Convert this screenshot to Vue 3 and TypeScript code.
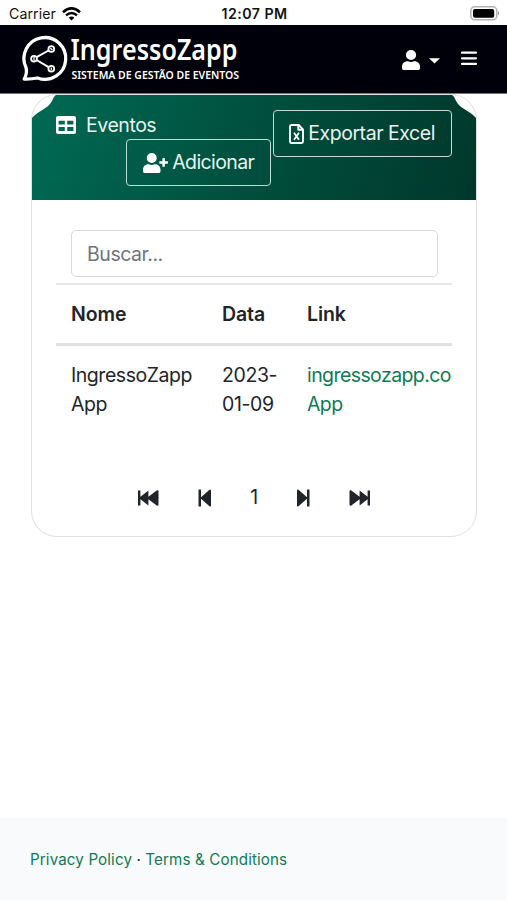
<script setup lang="ts">
import { ref } from 'vue'

interface EventRow {
  name: string
  date: string
  link: string
}

const search = ref('')
const page = ref(1)
const rows: EventRow[] = [
  { name: 'IngressoZapp App', date: '2023-01-09', link: 'ingressozapp.co App' },
]
</script>

<template>
  <div class="screen">
    <div class="status">
      <div class="carrier">
        <span>Carrier</span>
        <svg width="19" height="14" viewBox="0 0 19 14">
          <path d="M1 5.2Q9.5-2.3 18 5.2" fill="none" stroke="#000" stroke-width="2.6" />
          <path d="M4 8.3Q9.5 3.5 15 8.3" fill="none" stroke="#000" stroke-width="2.4" />
          <path d="M6.6 10.6Q9.5 8.2 12.4 10.6L9.5 13.6Z" />
        </svg>
      </div>
      <span class="clock">12:07 PM</span>
      <svg class="battery" width="30" height="15" viewBox="0 0 30 15">
        <rect x="0.8" y="0.8" width="26" height="13" rx="4" fill="#fff" stroke="#b4b4b4" stroke-width="1.6" />
        <rect x="3" y="3" width="21.2" height="8.8" rx="2" />
        <path d="M28 5Q30.2 7.3 28 9.6Z" fill="#999" />
      </svg>
    </div>

    <nav class="navbar">
      <svg class="logo" width="222" height="56" viewBox="0 0 222 56">
        <g fill="none" stroke="#fff">
          <path d="M5 36.5A20.9 20.9 0 1 1 16.5 47Q10 48.2 3.2 48Q6.6 42 5 36.5Z" stroke-width="3.3" stroke-linejoin="round" />
          <path d="M15.6 26.2L27.6 19.5M15.6 29L27.6 36.2" stroke-width="2" />
          <circle cx="13" cy="27.7" r="2.9" stroke-width="1.8" />
          <circle cx="30.3" cy="18" r="2.9" stroke-width="1.8" />
          <circle cx="30.3" cy="37.8" r="2.9" stroke-width="1.8" />
          <path d="M13 25.8v4M29.3 17l2 2M30.3 36.4v2.8" stroke-width="1.3" />
        </g>
        <text class="brand" x="49.5" y="29.3" textLength="167" lengthAdjust="spacingAndGlyphs">IngressoZapp</text>
        <text class="tagline" x="50.5" y="47.5" textLength="167.5" lengthAdjust="spacingAndGlyphs">SISTEMA DE GESTÃO DE EVENTOS</text>
      </svg>
      <div class="nav-actions">
        <svg width="18" height="20" viewBox="0 0 448 512" preserveAspectRatio="none">
          <path fill="#fff" d="M224 256a128 128 0 1 0 0-256 128 128 0 0 0 0 256zm90 32h-17a174 174 0 0 1-146 0h-17C60 288 0 348 0 422v42c0 27 21 48 48 48h352c27 0 48-21 48-48v-42c0-74-60-134-134-134z" />
        </svg>
        <svg class="caret" width="11" height="6" viewBox="0 0 12 7" preserveAspectRatio="none"><path d="M0 .3h12L6 6.4Z" fill="#fff" /></svg>
        <svg class="menu" width="16" height="15" viewBox="0 0 16 15">
          <path d="M1 1.7h14M1 7.3h14M1 12.9h14" stroke="#fff" stroke-width="2.2" stroke-linecap="round" />
        </svg>
      </div>
    </nav>

    <main>
      <section class="card">
        <header class="card-header">
          <div class="title">
            <svg width="20" height="18" viewBox="0 0 20 18">
              <path fill="#fff" fill-rule="evenodd" d="M2 0h16q2 0 2 2v14q0 2-2 2H2q-2 0-2-2V2q0-2 2-2ZM2.6 4.8v3.8h6.2V4.8ZM11.2 4.8v3.8h6.2V4.8ZM2.6 11v4h6.2v-4ZM11.2 11v4h6.2v-4Z" />
            </svg>
            <span>Eventos</span>
          </div>
          <div class="buttons">
            <button class="btn add" type="button">
              <svg width="25" height="20" viewBox="0 0 640 512">
                <path fill="#fff" d="M224 256a128 128 0 1 0 0-256 128 128 0 0 0 0 256zm90 32h-17a174 174 0 0 1-146 0h-17C60 288 0 348 0 422v42c0 27 21 48 48 48h352c27 0 48-21 48-48v-42c0-74-60-134-134-134zM624 208h-64v-64c0-9-7-16-16-16h-32c-9 0-16 7-16 16v64h-64c-9 0-16 7-16 16v32c0 9 7 16 16 16h64v64c0 9 7 16 16 16h32c9 0 16-7 16-16v-64h64c9 0 16-7 16-16v-32c0-9-7-16-16-16z" />
              </svg>
              <span>Adicionar</span>
            </button>
            <button class="btn export" type="button">
              <svg width="15" height="20" viewBox="0 0 15 20">
                <path d="M2.5 1H9.7L14 5.3V17.5q0 1.5-1.5 1.5h-10Q1 19 1 17.5v-15Q1 1 2.5 1ZM9.3 1v4.8H14" fill="none" stroke="#fff" stroke-width="1.9" stroke-linejoin="round" />
                <path d="M5 8.8l5 7M10 8.8l-5 7" stroke="#fff" stroke-width="1.8" />
              </svg>
              <span>Exportar Excel</span>
            </button>
          </div>
        </header>

        <div class="card-body">
          <input v-model="search" class="search" type="text" placeholder="Buscar..." />
          <table>
            <thead>
              <tr><th class="c-name">Nome</th><th class="c-date">Data</th><th>Link</th></tr>
            </thead>
            <tbody>
              <tr v-for="row in rows" :key="row.name">
                <td>{{ row.name }}</td>
                <td class="date">{{ row.date }}</td>
                <td><a class="link">{{ row.link }}</a></td>
              </tr>
            </tbody>
          </table>
          <div class="pager">
            <svg width="21" height="16" viewBox="0 0 21 16"><path d="M0 .5h2.4v6.3L10.4.5v6.3L19 .3q1.5-.5 1.5 1v13.4q0 1.5-1.5 1L10.4 9.2v6.3l-8-6.3v6.3H0Z" /></svg>
            <svg width="14" height="18" viewBox="0 0 14 18"><path d="M.5.5H3v7.7L11.5.7Q13 0 13 1.6v14.8q0 1.6-1.5.9L3 9.8v7.7H.5Z" /></svg>
            <span>{{ page }}</span>
            <svg class="flip" width="14" height="18" viewBox="0 0 14 18"><path d="M.5.5H3v7.7L11.5.7Q13 0 13 1.6v14.8q0 1.6-1.5.9L3 9.8v7.7H.5Z" /></svg>
            <svg class="flip" width="21" height="16" viewBox="0 0 21 16"><path d="M0 .5h2.4v6.3L10.4.5v6.3L19 .3q1.5-.5 1.5 1v13.4q0 1.5-1.5 1L10.4 9.2v6.3l-8-6.3v6.3H0Z" /></svg>
          </div>
        </div>
      </section>
    </main>

    <footer>
      <a>Privacy Policy</a><span> · </span><a>Terms &amp; Conditions</a>
    </footer>
  </div>
</template>

<style>
body {
  margin: 0;
  background: #fff;
}
</style>

<style scoped>
* {
  box-sizing: border-box;
}
svg {
  display: block;
  flex: none;
  overflow: visible;
}
.screen {
  width: 507px;
  height: 900px;
  overflow: hidden;
  display: flex;
  flex-direction: column;
  font-family: Inter, 'Liberation Sans', sans-serif;
  font-size: 19.5px;
  line-height: 29.4px;
  letter-spacing: -0.45px;
  color: #212529;
}
.status {
  height: 25px;
  flex: none;
  display: grid;
  grid-template-columns: 1fr auto 1fr;
  align-items: center;
  padding: 2px 7px 0 9px;
  font-size: 14.2px;
  line-height: 22px;
  letter-spacing: 0.05px;
  color: #111;
}
.carrier {
  display: flex;
  align-items: center;
  gap: 6px;
}
.clock {
  font-weight: 600;
  letter-spacing: 0.45px;
}
.battery {
  justify-self: end;
}
.navbar {
  height: 69px;
  flex: none;
  background: #00000a;
  border-bottom: 1px solid #777;
  display: flex;
  justify-content: space-between;
  padding: 6px 30px 0 21px;
  letter-spacing: 0;
}
.brand {
  font: 600 28px 'Noto Sans', sans-serif;
  fill: #fff;
}
.tagline {
  font: 600 11px 'Noto Sans', sans-serif;
  fill: #fff;
}
.nav-actions {
  display: flex;
  align-items: center;
  height: 57px;
}
.caret {
  margin: 2px 21px 0 9px;
}
.menu {
  margin-top: -2px;
}
main {
  flex: 1;
  padding: 0 30px 0 31px;
}
.card {
  height: 443px;
  border: 1px solid #dfe1e2;
  border-radius: 26px;
}
.card-header {
  height: 105px;
  display: flex;
  justify-content: space-between;
  padding: 15px 24px 0;
  color: #e9f3f0;
  background: linear-gradient(105deg, #006a54 0%, #004f3e 50%, #00382b 100%);
  clip-path: path('M0 23C4 17 16 14 20 6Q22 1 24 0H420Q422 1 424 6C428 14 440 17 444 23V105H0Z');
}
.title {
  display: flex;
  align-items: center;
  gap: 10px;
  height: 30px;
}
.title span {
  margin-top: 1px;
}
.buttons {
  display: flex;
  gap: 2px;
  margin-left: -30px;
}
.btn {
  height: 47px;
  display: flex;
  align-items: center;
  padding: 0 0 0 15px;
  font: inherit;
  letter-spacing: inherit;
  color: inherit;
  background: transparent;
  border: 1.5px solid #c4dad4;
  border-radius: 4px;
}
.add {
  width: 145px;
  margin-top: 29px;
  padding-left: 16px;
  gap: 4px;
  letter-spacing: -0.6px;
}
.add span {
  margin-top: 1px;
}
.export {
  width: 179px;
  gap: 4px;
}
.export span {
  margin-top: 1px;
}
.card-body {
  padding: 30px 24px 0;
}
.search {
  display: block;
  width: 367px;
  height: 47px;
  margin: 0 0 6px 15px;
  padding: 1px 15px 0;
  font: inherit;
  letter-spacing: inherit;
  border: 1.5px solid #d6dadd;
  border-radius: 5px;
  outline: none;
}
.search::placeholder {
  color: #6c757d;
  opacity: 1;
}
table {
  width: 396px;
  table-layout: fixed;
  border-collapse: collapse;
}
th {
  height: 60px;
  padding: 1px 0 0 15px;
  text-align: left;
  font-weight: 600;
  letter-spacing: -0.1px;
  border-top: 2px solid #e6e8ea;
  border-bottom: 3px solid #dee0e2;
}
.c-name {
  width: 151px;
}
.c-date {
  width: 85px;
}
td {
  padding: 15px 0 0 15px;
  vertical-align: top;
}
.date {
  letter-spacing: -0.4px;
}
.link {
  color: #117a56;
  letter-spacing: -0.58px;
}
.pager {
  display: flex;
  align-items: center;
  justify-content: space-between;
  width: 232px;
  margin: 63px auto 0;
}
.pager span {
  margin-top: 1px;
}
.pager svg {
  fill: #212529;
}
.flip {
  transform: scaleX(-1);
}
footer {
  height: 82px;
  flex: none;
  padding: 27px 30px 0;
  background: #f8fafc;
  font-size: 15.2px;
  letter-spacing: 0.11px;
  white-space: pre;
}
footer a {
  color: #117a56;
}
</style>
